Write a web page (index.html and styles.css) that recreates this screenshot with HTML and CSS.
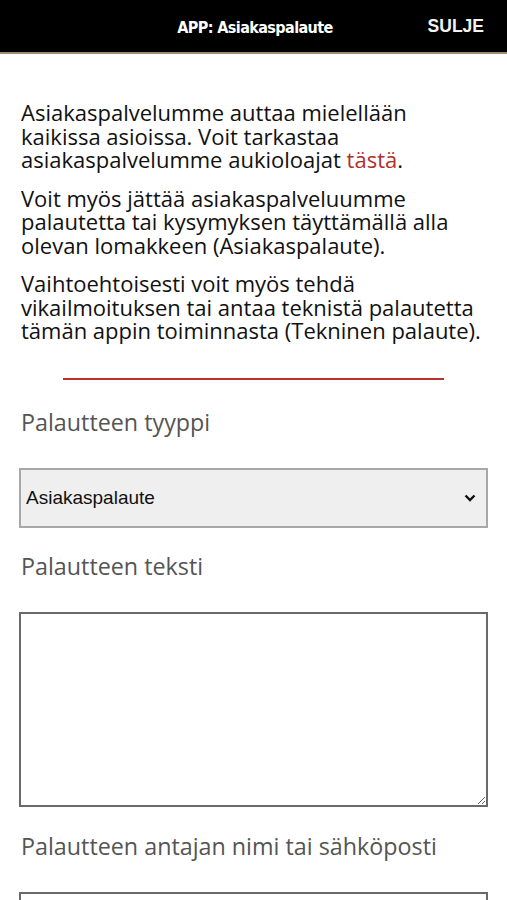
FILE: index.html
```html
<!DOCTYPE html>
<html lang="fi">
<head>
<meta charset="utf-8">
<title>APP: Asiakaspalaute</title>
<link rel="stylesheet" href="styles.css">
</head>
<body>
<header class="topbar">
  <div class="title">APP: Asiakaspalaute</div>
  <a class="close" href="#">SULJE</a>
</header>
<main class="content">
  <section class="intro">
    <p>Asiakaspalvelumme auttaa mielellään kaikissa asioissa. Voit tarkastaa asiakaspalvelumme aukioloajat <a href="#" class="link">tästä</a>.</p>
    <p>Voit myös jättää asiakaspalveluumme palautetta tai kysymyksen täyttämällä alla olevan lomakkeen (Asiakaspalaute).</p>
    <p>Vaihtoehtoisesti voit myös tehdä vikailmoituksen tai antaa teknistä palautetta tämän appin toiminnasta (Tekninen palaute).</p>
  </section>
  <hr class="divider">
  <form class="form">
    <label class="label" for="type">Palautteen tyyppi</label>
    <div class="select-wrap">
      <select id="type" class="select">
        <option>Asiakaspalaute</option>
        <option>Tekninen palaute</option>
      </select>
      <svg class="chev" width="12" height="8" viewBox="0 0 12 8"><path d="M1.5 1.5 L6 6 L10.5 1.5" fill="none" stroke="#111" stroke-width="2.4"/></svg>
    </div>
    <label class="label" for="text">Palautteen teksti</label>
    <textarea id="text" class="textarea"></textarea>
    <label class="label" for="name">Palautteen antajan nimi tai sähköposti</label>
    <input id="name" class="input" type="text">
  </form>
</main>
</body>
</html>
```
FILE: styles.css
```css
html, body {
  margin: 0;
  padding: 0;
  background: #fff;
}
body {
  font-family: "Open Sans", "Noto Sans", sans-serif;
  color: #111;
}
.topbar {
  height: 52px;
  background: #000;
  border-bottom: 2px solid #9a8d6e;
  display: flex;
  align-items: center;
  justify-content: center;
  position: relative;
}
.title {
  color: #fff;
  font-family: "Liberation Sans Narrow", "DejaVu Sans Condensed", sans-serif;
  font-stretch: condensed;
  font-weight: bold;
  font-size: 16px;
  letter-spacing: -0.6px;
  margin-left: 3px;
  margin-top: 3px;
}
.close {
  position: absolute;
  right: 23px;
  top: 16px;
  color: #f2f2f2;
  text-decoration: none;
  font-family: "Liberation Sans", Arial, sans-serif;
  font-weight: bold;
  font-size: 17.5px;
}
.content {
  padding: 47px 19px 0 19px;
}
.intro {
  padding-left: 2px;
}
.intro p {
  margin: 0 0 15px 0;
  font-size: 22px;
  line-height: 23.5px;
}
.intro p:last-child {
  margin-bottom: 0;
}
.link {
  color: #b0302a;
  text-decoration: none;
}
.divider {
  margin: 35px 44px 0 44px;
  border: 0;
  height: 2px;
  background: #b9322c;
}
.form {
  display: flex;
  flex-direction: column;
  padding-top: 30px;
}
.label {
  font-size: 23.3px;
  line-height: 24px;
  color: #555;
  padding-left: 2px;
  margin-bottom: 34px;
}
.select-wrap {
  position: relative;
  margin-bottom: 26px;
}
.select {
  appearance: none;
  -webkit-appearance: none;
  width: 100%;
  height: 60px;
  box-sizing: border-box;
  background: #efefef;
  border: 2px solid #a8a8a8;
  border-radius: 0;
  font-family: "Liberation Sans", Arial, sans-serif;
  font-size: 19px;
  color: #111;
  padding: 0 5px;
  margin: 0;
}
.chev {
  position: absolute;
  right: 12px;
  top: 26px;
  pointer-events: none;
}
.textarea {
  height: 195px;
  box-sizing: border-box;
  border: 2px solid #6a6a6a;
  border-radius: 0;
  margin: 0 0 27px 0;
  font-family: "Liberation Sans", Arial, sans-serif;
  font-size: 16px;
}
.input {
  height: 50px;
  box-sizing: border-box;
  border: 2px solid #6a6a6a;
  border-radius: 0;
  margin: 0;
}
```
